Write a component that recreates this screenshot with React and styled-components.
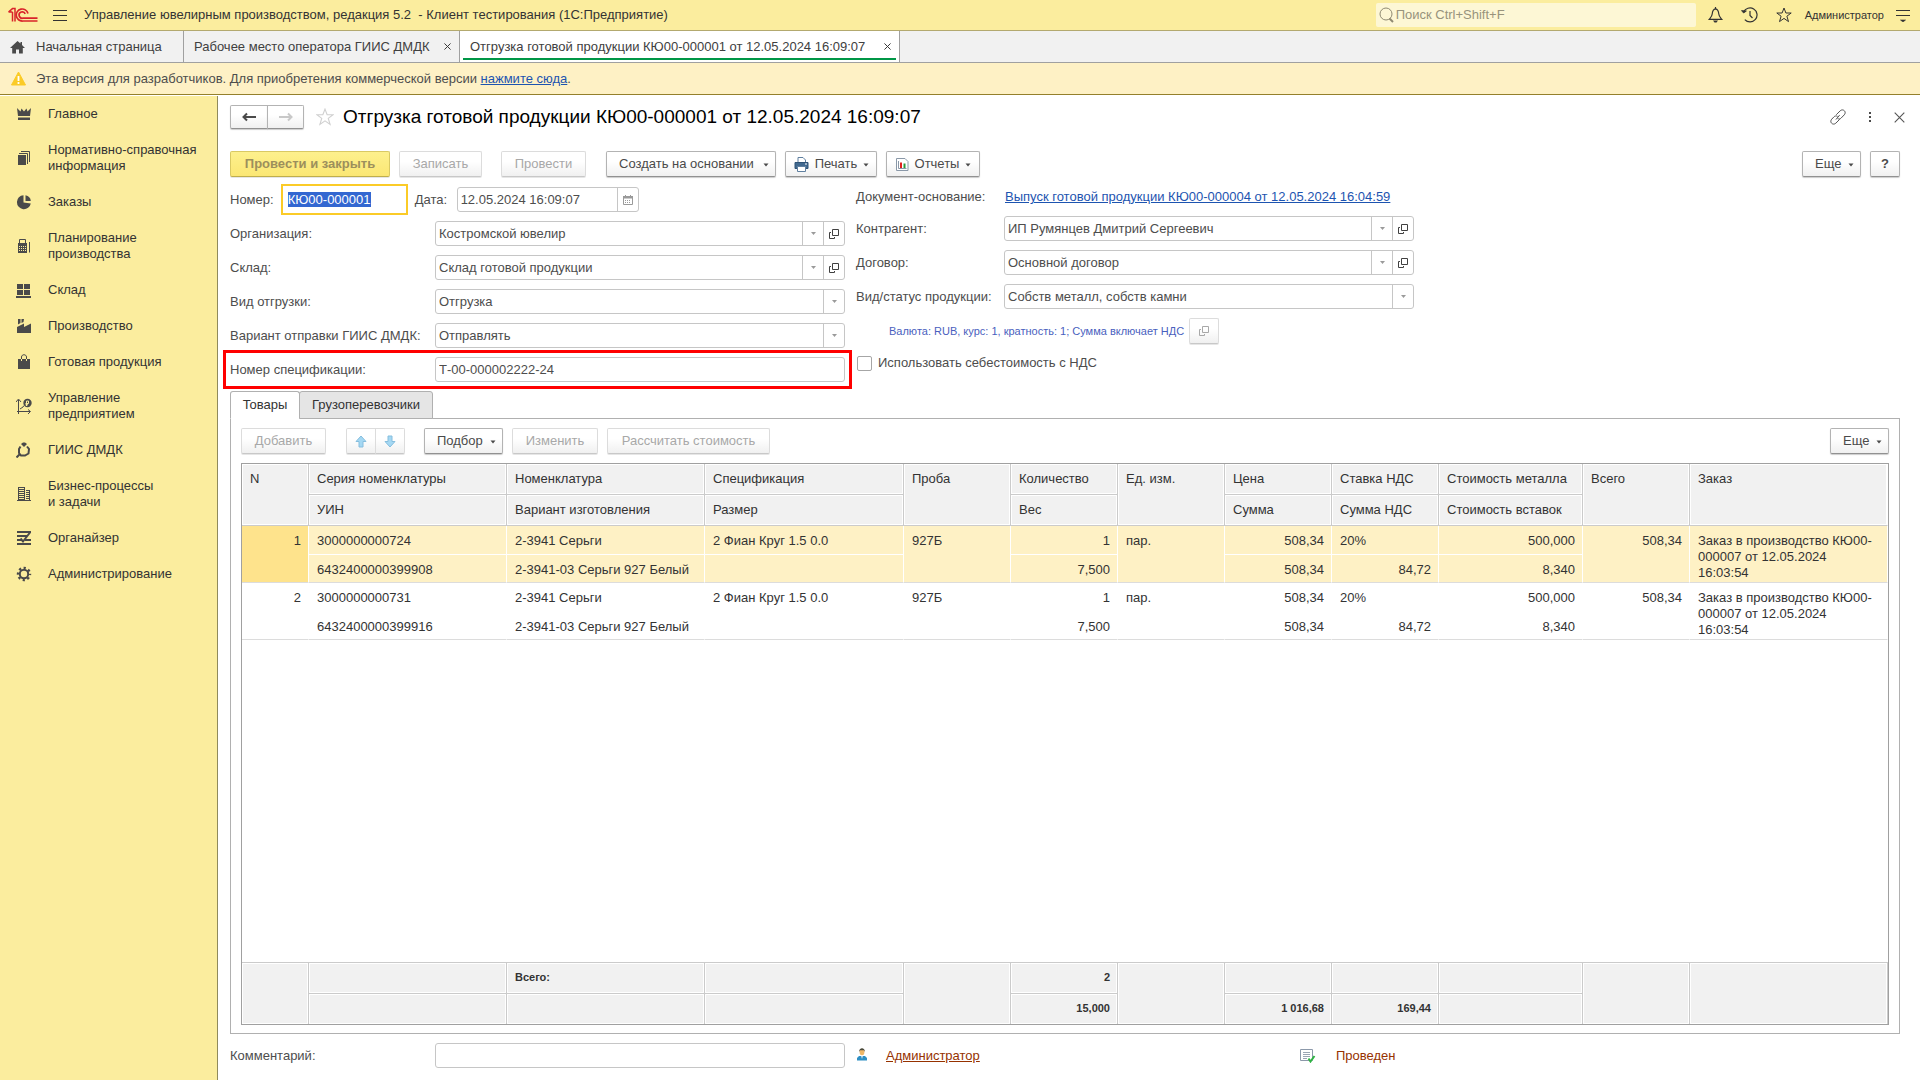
import React, { useEffect, useRef } from 'react';
import styled, { createGlobalStyle, css } from 'styled-components';

const GlobalStyle = createGlobalStyle`
    * {
        box-sizing: border-box;
    }

    body {
        margin: 0;
        background: #ffffff;
        color: #4d4d4d;
        font-family: 'Liberation Sans', Arial, sans-serif;
        font-size: 13px;
        line-height: 16px;
    }

    button, input, select {
        font: inherit;
        color: inherit;
    }

    ::selection {
        background: #3367d1;
        color: #ffffff;
    }
`;

const Page = styled.div`
    min-height: 100vh;
    display: flex;
    flex-direction: column;
`;

const TitleBar = styled.header`
    height: 31px;
    padding: 0 10px 0 8px;
    display: flex;
    align-items: center;
    background: #fbed9e;
    border-bottom: 1px solid #b3a96f;
    color: #333333;
`;

const AppTitle = styled.div`
    flex: 1;
    margin-left: 17px;
    white-space: pre;
`;

const IconButton = styled.button`
    display: flex;
    padding: 0;
    border: 0;
    background: none;
    color: ${props => props.$color || '#333333'};
`;

const MenuButton = styled(IconButton)`
    margin-left: 15px;
`;

const Search = styled.label`
    width: 320px;
    height: 24px;
    margin-right: 12px;
    padding-left: 3px;
    display: flex;
    align-items: center;
    gap: 2px;
    border-radius: 2px;
    background: #fdf7d5;
    color: #8f8a72;

    input {
        flex: 1;
        padding: 0;
        border: 0;
        outline: 0;
        background: none;
    }

    input::placeholder {
        color: #98937c;
        opacity: 1;
    }
`;

const TitleActions = styled.div`
    display: flex;
    align-items: center;
    gap: 18px;
`;

const UserName = styled.span`
    margin: 0 -6px 0 -5px;
    font-size: 11px;
`;

const TabStrip = styled.nav`
    height: 32px;
    display: flex;
    background: #f1f1f1;
    border-bottom: 1px solid #a0a0a0;
`;

const WindowTab = styled.div`
    min-width: ${props => props.$width}px;
    padding: 0 8px 0 10px;
    display: flex;
    align-items: center;
    justify-content: space-between;
    gap: 9px;
    border-right: 1px solid #a0a0a0;
    background: ${props => props.$active ? '#ffffff' : 'none'};
    box-shadow: ${props => props.$active ? 'inset 3px 0 #ffffff, inset -3px 0 #ffffff, inset 0 -2px #ffffff, inset 0 -4px #009646' : 'none'};
    color: #404040;
    white-space: nowrap;
`;

const HomeTab = styled(WindowTab)`
    justify-content: flex-start;
    gap: 11px;
`;

const Notice = styled.div`
    height: 32px;
    padding-left: 11px;
    display: flex;
    align-items: center;
    gap: 10px;
    background: #fef1c5;
    border-bottom: 1px solid #94802b;
`;

const Link = styled.a`
    color: ${props => props.$brown ? '#963200' : '#1d54b0'};
    text-decoration: underline;
`;

const Body = styled.div`
    flex: 1;
    display: flex;
    padding-top: 1px;
`;

const Sidebar = styled.nav`
    flex: none;
    width: 218px;
    background: #fbed9e;
    border-right: 1px solid #8f8a5c;
`;

const SectionLink = styled.a`
    padding: 10px 8px 10px 16px;
    display: flex;
    align-items: center;
    gap: 16px;
    color: #333333;
    text-decoration: none;
    white-space: pre-line;

    svg {
        flex: none;
        color: #4a4a4a;
    }
`;

const Main = styled.main`
    flex: 1;
    min-width: 0;
    padding: 9px 20px 12px 12px;
    display: flex;
    flex-direction: column;
`;

const FormHeader = styled.div`
    height: 24px;
    margin-bottom: 22px;
    display: flex;
    align-items: center;
`;

const HistoryButtons = styled.div`
    display: flex;
    height: 24px;
    margin-right: 12px;
`;

const Heading = styled.h1`
    flex: 1;
    margin: 0 0 0 9px;
    color: #000000;
    font-size: 19px;
    font-weight: 400;
    line-height: 24px;
`;

const HeaderActions = styled.div`
    margin-right: -5px;
    display: flex;
    align-items: center;
    gap: 22px;
`;

const Toolbar = styled.div`
    display: flex;
    margin-bottom: ${props => props.$tight ? '9px' : '10px'};
`;

const Button = styled.button`
    height: 26px;
    min-width: ${props => props.$width || 30}px;
    padding: 0 9px;
    margin-right: 9px;
    display: flex;
    align-items: center;
    justify-content: center;
    gap: 6px;
    border: 1px solid #b3b3b3;
    border-bottom-color: #919191;
    border-radius: 2px;
    background: linear-gradient(#ffffff 40%, #f0f0f0);
    box-shadow: 0 1px 1px #cccccc;
    color: #4a4a4a;
    white-space: nowrap;

    &:disabled {
        border-color: #dcdcdc;
        border-bottom-color: #c8c8c8;
        box-shadow: 0 1px #e6e6e6;
        color: #a8a8a8;
    }

    &:last-child {
        margin-right: 0;
    }

    ${props => props.$menu && css`
        padding: 0 6px 0 12px;
        justify-content: space-between;
    `}

    ${props => props.$icon && css`
        padding: 0 6px 0 7px;
    `}

    ${props => props.$primary && css`
        &:disabled {
            border-color: #d9c964;
            border-bottom-color: #bfae4c;
            background: linear-gradient(#fdf08d, #fbe774);
            color: #9c8f5c;
            font-weight: 700;
        }
    `}

    ${props => props.$gap && css`
        margin-right: ${props.$gap}px;
    `}
`;

const JoinedButton = styled(Button)`
    width: ${props => props.$width}px;
    height: ${props => props.$height}px;
    padding: 0;
    margin: 0;
    border-radius: 2px 0 0 2px;

    & + & {
        margin-left: -1px;
        border-radius: 0 2px 2px 0;
    }
`;

const ArrowPair = styled.div`
    display: flex;
    margin-right: 19px;
`;

const Spacer = styled.div`
    flex: 1;
`;

const FormColumns = styled.div`
    display: flex;
    gap: 11px;
    margin-bottom: 9px;
`;

const FormColumn = styled.div`
    width: ${props => props.$width}px;
    display: flex;
    flex-direction: column;
    gap: 9px;
`;

const Row = styled.div`
    height: ${props => props.$height || 25}px;
    display: flex;
    align-items: center;
    white-space: nowrap;

    ${props => props.$marked && css`
        outline: 3px solid #ff0000;
        outline-offset: 4px;
    `}
`;

const Label = styled.label`
    flex: none;
    width: ${props => props.$width ? `${props.$width}px` : 'auto'};
`;

const FieldBox = styled.div`
    flex: ${props => props.$width ? 'none' : 1};
    width: ${props => props.$width ? `${props.$width}px` : 'auto'};
    height: 25px;
    display: flex;
    border: 1px solid #c6c6c6;
    border-radius: 3px;
    background: #ffffff;

    input, select {
        flex: 1;
        min-width: 0;
        padding: 0 3px;
        border: 0;
        outline: 0;
        background: none;
        appearance: none;
    }
`;

const NumberInput = styled.input`
    width: 121px;
    height: 25px;
    margin: 0 10px;
    padding: 0 4px;
    border: 0;
    outline: 2px solid #fbcb27;
    outline-offset: 1px;
`;

const FieldButton = styled.button`
    width: 21px;
    padding: 0;
    display: flex;
    align-items: center;
    justify-content: center;
    border: 0;
    border-left: 1px solid #c6c6c6;
    background: none;
    color: ${props => props.$dark ? '#404040' : '#9a9a9a'};
`;

const CurrencyText = styled.span`
    margin: 0 5px 0 33px;
    color: #4a5fbe;
    font-size: 11px;
`;

const CheckLabel = styled.label`
    display: flex;
    align-items: center;
    gap: 6px;

    input {
        width: 15px;
        height: 15px;
        margin: 0 0 0 1px;
        appearance: none;
        border: 1px solid #a6a6a6;
        border-radius: 2px;
        background: #ffffff;
    }
`;

const PageTabs = styled.div`
    display: flex;
    position: relative;
    margin-bottom: -1px;
`;

const PageTab = styled.button`
    height: 28px;
    min-width: ${props => props.$width}px;
    padding: 0 10px;
    border: 1px solid #b0b0b0;
    border-radius: 3px 3px 0 0;
    background: ${props => props.$active ? '#ffffff' : '#e5e5e5'};
    border-bottom-color: ${props => props.$active ? '#ffffff' : '#b0b0b0'};
    color: #333333;

    & + & {
        margin-left: -1px;
    }
`;

const Panel = styled.section`
    flex: 1;
    padding: 9px 10px 8px;
    display: flex;
    flex-direction: column;
    border: 1px solid #b0b0b0;
`;

const TableFrame = styled.div`
    flex: 1;
    display: grid;
    border: 1px solid #a0a0a0;
`;

const Table = styled.table`
    width: 100%;
    height: 100%;
    table-layout: fixed;
    border-collapse: separate;
    border-spacing: 0;
    color: #333333;
`;

const HeadCell = styled.th`
    height: 31px;
    padding: 7px 8px 6px;
    background: #f1f1f1;
    border-right: 1px solid #cbcbcb;
    border-bottom: 1px solid #cbcbcb;
    box-shadow: inset 0 0 0 1px #ffffff;
    font-weight: 400;
    text-align: left;
    vertical-align: top;
    white-space: nowrap;

    &:last-child[rowspan='2'] {
        border-right-color: #ffffff;
    }
`;

const Cell = styled.td`
    height: ${props => props.$second ? 28 : 29}px;
    padding: ${props => props.$second ? '7px 7px 4px 8px' : '7px 7px 1px 8px'};
    border-right: 1px solid #ffffff;
    border-bottom: 1px solid ${props => props.$closing ? '#dcdcdc' : '#ffffff'};
    background: ${props => props.$selected ? '#fef1c5' : '#ffffff'};
    text-align: ${props => props.$right ? 'right' : 'left'};
    vertical-align: top;

    ${props => props.$current && css`
        background: #fee38c;
    `}
`;

const FillerCell = styled.td`
    height: 100%;
    padding: 0;
`;

const FootCell = styled.td`
    height: 31px;
    padding: 6px 7px 7px 8px;
    background: #f1f1f1;
    border-right: 1px solid #cbcbcb;
    border-top: 1px solid #cbcbcb;
    box-shadow: inset 0 0 0 1px #ffffff;
    font-size: 11px;
    font-weight: 700;
    text-align: ${props => props.$right ? 'right' : 'left'};
    vertical-align: top;
`;

const Footer = styled.footer`
    height: 25px;
    margin-top: 9px;
    display: flex;
    align-items: center;
`;

const Author = styled.div`
    width: 442px;
    padding-left: 12px;
    display: flex;
    align-items: center;
    gap: 19px;
`;

const Status = styled.div`
    padding-left: 12px;
    display: flex;
    align-items: center;
    gap: 20px;
    color: #963200;
`;

/* icons */

const Svg = ({ w = 16, h = 16, box, children, ...rest }) => (
    <svg width={w} height={h} viewBox={box || `0 0 ${w} ${h}`} fill="none" aria-hidden="true" {...rest}>
        {children}
    </svg>
);

const Logo = () => (
    <Svg w={30} h={16} stroke="#d9232a" strokeWidth="1.7">
        <path d="M0.5 5L4.5 1.6H7V14.5M4.5 5V14.5M0.5 5H4.5" strokeWidth="1.5" />
        <path d="M20 6.4A6 6 0 1 0 14.8 14H29.5" />
        <path d="M17.2 6.8A3.2 3.2 0 1 0 14.8 11.2H29.5" />
    </Svg>
);

const BurgerIcon = () => (
    <Svg w={14} h={14} stroke="currentColor">
        <path d="M0 2.5H14M0 7.5H14M0 12.5H14" />
    </Svg>
);

const SearchIcon = () => (
    <Svg w={15} h={16} stroke="currentColor">
        <circle cx="7" cy="7" r="6" />
        <path d="M10.5 11.5L14 15" strokeWidth="2" />
    </Svg>
);

const BellIcon = () => (
    <Svg w={15} h={16} stroke="currentColor" strokeWidth="1.2">
        <path d="M7.5 1.8C4.8 2.2 4.4 4.5 4.2 7C4 9.5 2.5 10.8 1.2 12.4H13.8C12.5 10.8 11 9.5 10.8 7C10.6 4.5 10.2 2.2 7.5 1.8Z" />
        <path d="M7.5 0V2" />
        <path d="M5 13.5H10L8.5 15.5H6.5Z" fill="currentColor" stroke="none" />
    </Svg>
);

const HistoryIcon = () => (
    <Svg w={17} h={16} stroke="currentColor" strokeWidth="1.2">
        <path d="M2.6 5.2A7 7 0 1 1 3.8 12.6" />
        <path d="M0.5 3.6L2.6 6L5.4 4Z" fill="currentColor" strokeWidth="0.8" />
        <path d="M9 4V8.5L11.5 11" />
    </Svg>
);

const StarIcon = ({ size = 16, color = 'currentColor' }) => (
    <Svg w={size} h={size} box="0 0 16 16" stroke={color}>
        <path d="M8 1L9.9 6H15.2L10.9 9.2L12.5 14.6L8 11.4L3.5 14.6L5.1 9.2L0.8 6H6.1Z" />
    </Svg>
);

const ServiceIcon = () => (
    <Svg w={14} h={14}>
        <path d="M0 2.5H14M0 7.5H14" stroke="currentColor" />
        <path d="M4.5 12H9.5L7 14Z" fill="currentColor" stroke="currentColor" strokeWidth="0.6" />
    </Svg>
);

const HomeIcon = () => (
    <Svg w={15} h={14}>
        <path d="M7.5 1L0 8H2.2V13.5H6V9.5H9V13.5H12.8V8H15L12 5V2H10.5V3.6Z" fill="#4a4a4a" />
    </Svg>
);

const CloseIcon = ({ size = 7 }) => (
    <Svg w={size} h={size} box="0 0 8 8" stroke="currentColor" strokeWidth={size > 8 ? 0.8 : 1.1}>
        <path d="M0.5 0.5L7.5 7.5M7.5 0.5L0.5 7.5" />
    </Svg>
);

const WarningIcon = () => (
    <Svg w={15} h={15}>
        <path d="M7.5 1L14.5 14H0.5Z" fill="#fbcb27" stroke="#fbcb27" strokeLinejoin="round" />
        <path d="M7.5 5V10M7.5 11V13" stroke="#ffffff" strokeWidth="1.8" />
    </Svg>
);

const BackIcon = ({ forward }) => (
    <Svg w={14} h={10} stroke={forward ? '#c8c8c8' : '#4a4a4a'} strokeWidth="2">
        {forward
            ? <path d="M0 5H12M9 1.5L12.5 5L9 8.5" />
            : <path d="M14 5H2M5 1.5L1.5 5L5 8.5" />}
    </Svg>
);

const ChainIcon = () => (
    <Svg w={16} h={16} stroke="currentColor" strokeLinecap="round">
        <path d="M6.5 5.5L10.2 1.8C11.4 .6 13.3 .6 14.4 1.8C15.5 2.9 15.4 4.6 14.3 5.8L11 9.2C10.2 10 9 10.2 8 9.8" />
        <path d="M9.5 10.5L5.8 14.2C4.6 15.4 2.7 15.4 1.6 14.2C.5 13.1 .6 11.4 1.7 10.2L4 7.8C4.8 7 6 6.6 7.2 7.2" />
        <path d="M6.2 10.2L9.4 6.4" />
    </Svg>
);

const DotsIcon = () => (
    <Svg w={4} h={12}>
        <path d="M1 1h2v2H1zM1 5h2v2H1zM1 9h2v2H1z" fill="#4a4a4a" />
    </Svg>
);

const Caret = () => (
    <Svg w={6} h={5}>
        <path d="M0.5 1.5H5.5L3 4.5Z" fill="currentColor" />
    </Svg>
);

const FieldCaret = () => (
    <Svg w={5} h={3}>
        <path d="M0 0H5L2.5 3Z" fill="currentColor" />
    </Svg>
);

const OpenIcon = () => (
    <Svg w={10} h={10} stroke="currentColor">
        <path d="M3.5 0.5H9.5V6.5H3.5ZM2 3.5H0.5V9.5H5.5V8" />
    </Svg>
);

const CalendarIcon = () => (
    <Svg w={10} h={10}>
        <path d="M0.5 1.5H9.5V9.5H0.5Z" stroke="currentColor" />
        <path d="M0 1H10V3.5H0Z" fill="currentColor" />
        <path d="M2.5 0V2M7.5 0V2" stroke="currentColor" />
        <path d="M2 5.5H8M2 7.5H8" stroke="currentColor" strokeDasharray="1 1" />
    </Svg>
);

const PrinterIcon = () => (
    <Svg w={15} h={15}>
        <path d="M4 5V0.5H9L11.5 3V5" fill="#ffffff" stroke="#5f7f9f" />
        <path d="M1 5.5H14V11.5H1Z" fill="#41698f" stroke="#2f5377" />
        <path d="M11 7H13" stroke="#ffffff" />
        <path d="M3.5 9.5H11.5V14.5H3.5Z" fill="#ffffff" stroke="#5f7f9f" />
    </Svg>
);

const ReportIcon = () => (
    <Svg w={13} h={15}>
        <path d="M0.5 1.5H9L12 4.5V13.5H0.5Z" fill="#ffffff" stroke="#8a98a8" />
        <path d="M2.5 4V11.5H10.5" stroke="#8a98a8" />
        <path d="M5 5.5V11" stroke="#e02020" strokeWidth="2" />
        <path d="M8.5 6.5V11" stroke="#2a9a3a" strokeWidth="2" />
    </Svg>
);

const MoveIcon = ({ down }) => (
    <Svg w={12} h={13}>
        <path
            d={down ? 'M4 1H8V6.5H11L6 12L1 6.5H4Z' : 'M6 1L11 6.5H8V12H4V6.5H1Z'}
            fill="#a5d8f3"
            stroke="#86bede"
        />
    </Svg>
);

const PersonIcon = () => (
    <Svg w={10} h={16}>
        <path d="M0 12.5V10L2 8H8L10 10V12.5Z" fill="#2f8fc4" />
        <path d="M4 7H6L5 11Z" fill="#ffffff" />
        <ellipse cx="5" cy="4" rx="2.4" ry="3.2" fill="#efb768" />
        <path d="M2 4C2 -1 8 -1 8 4L7 2.3H3Z" fill="#4a4a3c" />
    </Svg>
);

const PostedIcon = () => (
    <Svg w={17} h={14}>
        <path d="M1.5 0.5H13.5V11.5H1.5Z" fill="#ffffff" stroke="#8c99aa" />
        <path d="M4 3.5H11M4 5.5H11M4 7.5H11M4 9.5H8" stroke="#9aa6b4" />
        <path d="M9.5 9.5L11.5 12.5L15.5 7" stroke="#2fb344" strokeWidth="2" />
    </Svg>
);

const sectionIcons = {
    crown: <path d="M1 2L4.5 5.5L5.5 2.5L8 5.5L10.5 2.5L11.5 5.5L15 2L14 10H2ZM2 11.5H14V14H2Z" fill="currentColor" />,
    docs: (
        <>
            <path d="M2 5H10V15H2Z" fill="currentColor" />
            <path d="M3 3.5H11.5V14M5 1.5H13.5V12" stroke="currentColor" />
        </>
    ),
    pie: (
        <>
            <path d="M7.5 8.5V1.2A7 7 0 1 0 14.8 9.5L7.5 8.5Z" fill="currentColor" />
            <path d="M9.5 7V1.2A6.5 6.5 0 0 1 14.8 7Z" fill="currentColor" />
        </>
    ),
    calc: (
        <>
            <path d="M3.5 5V1.5H9.5V5M13.5 4V14.5" stroke="currentColor" />
            <path d="M2 5H11V15H2Z" fill="currentColor" />
            <path d="M3 8.5H10M3 10.5H10M3 12.5H10" stroke="#fbed9e" strokeDasharray="1 1" />
        </>
    ),
    boxes: <path d="M1 2H7V7H1ZM8 2H14V7H8ZM1 8H7V13H1ZM8 8H14V13H8ZM0 14H15V16H0Z" fill="currentColor" />,
    factory: <path d="M1 15V9L8 5.5V9L15 5.5V15ZM2 1H4.5V5L2 6.5ZM5.5 1H8L7.5 4L5.5 5Z" fill="currentColor" />,
    bag: (
        <>
            <path d="M2 5H14V15H2Z" fill="currentColor" />
            <path d="M5.5 5V3C5.5 0 10.5 0 10.5 3V5" stroke="currentColor" />
            <path d="M5.5 5V7M10.5 5V7" stroke="#fbed9e" />
        </>
    ),
    chart: (
        <>
            <path d="M2.5 16V2M0 4L2.5 1L5 4M1 13.5H14M12 11.5L14.5 13.5L12 16M4 11L7 9L8 7.5" stroke="currentColor" />
            <circle cx="11.5" cy="5" r="4.2" fill="currentColor" />
            <path d="M10.5 8V3H12.5V5.5H9.5M9.5 6.8H12" stroke="#fbed9e" />
        </>
    ),
    ring: (
        <>
            <path d="M4.5 4.5L3 7V11L5 13.5H9L12.5 11.5L13 7L11 4.5" stroke="currentColor" strokeWidth="2" />
            <path d="M5 2L7 0.5H9L11 2L8 5Z" fill="currentColor" />
            <path d="M4 12L0.5 15.5" stroke="currentColor" strokeWidth="2" />
        </>
    ),
    building: (
        <>
            <path d="M1 14.5H15" stroke="currentColor" />
            <path d="M2 1H9V15H2ZM10 4H14V15H10Z" fill="currentColor" />
            <path d="M3 2.5H8M3 4.5H8M3 6.5H8M3 8.5H8M3 10.5H8M3 12.5H8M10 5.5H13M10 7.5H13M10 9.5H13M10 11.5H13M10 13.5H13" stroke="#fbed9e" />
        </>
    ),
    organizer: (
        <>
            <path d="M1 2H15M1 6H11M1 10H6M9 10H15M1 14H15" stroke="currentColor" strokeWidth="2" />
            <path d="M14 2.5L7 11.5L4.5 8.5" stroke="currentColor" strokeWidth="2" />
        </>
    ),
    gear: (
        <>
            <circle cx="8" cy="8" r="4.2" stroke="currentColor" strokeWidth="2" />
            <circle cx="8" cy="8" r="6" stroke="currentColor" strokeWidth="2.4" strokeDasharray="2.2 2.51" strokeDashoffset="1.1" />
        </>
    ),
};

/* data */

const sections = [
    { icon: 'crown', title: 'Главное' },
    { icon: 'docs', title: 'Нормативно-справочная\nинформация' },
    { icon: 'pie', title: 'Заказы' },
    { icon: 'calc', title: 'Планирование\nпроизводства' },
    { icon: 'boxes', title: 'Склад' },
    { icon: 'factory', title: 'Производство' },
    { icon: 'bag', title: 'Готовая продукция' },
    { icon: 'chart', title: 'Управление\nпредприятием' },
    { icon: 'ring', title: 'ГИИС ДМДК' },
    { icon: 'building', title: 'Бизнес-процессы\nи задачи' },
    { icon: 'organizer', title: 'Органайзер' },
    { icon: 'gear', title: 'Администрирование' },
];

// top / bottom: captions of the two header lines, no bottom means the cell spans both
const columns = [
    { width: 67, top: 'N', key: 'n', right: true },
    { width: 198, top: 'Серия номенклатуры', bottom: 'УИН', key: 'series', key2: 'uin' },
    { width: 198, top: 'Номенклатура', bottom: 'Вариант изготовления', key: 'item', key2: 'variant', total: 'Всего:' },
    { width: 199, top: 'Спецификация', bottom: 'Размер', key: 'spec', key2: 'size' },
    { width: 107, top: 'Проба', key: 'probe' },
    { width: 107, top: 'Количество', bottom: 'Вес', key: 'count', key2: 'weight', right: true, right2: true, total: '2', total2: '15,000' },
    { width: 107, top: 'Ед. изм.', key: 'unit' },
    { width: 107, top: 'Цена', bottom: 'Сумма', key: 'price', key2: 'sum', right: true, right2: true, total2: '1 016,68' },
    { width: 107, top: 'Ставка НДС', bottom: 'Сумма НДС', key: 'rate', key2: 'vat', right2: true, total2: '169,44' },
    { width: 144, top: 'Стоимость металла', bottom: 'Стоимость вставок', key: 'metal', key2: 'stones', right: true, right2: true },
    { width: 107, top: 'Всего', key: 'total', right: true },
    { top: 'Заказ', key: 'order' },
];

const common = {
    item: '2-3941 Серьги',
    variant: '2-3941-03 Серьги 927 Белый',
    spec: '2 Фиан Круг 1.5 0.0',
    probe: '927Б',
    count: '1',
    weight: '7,500',
    unit: 'пар.',
    price: '508,34',
    sum: '508,34',
    rate: '20%',
    vat: '84,72',
    metal: '500,000',
    stones: '8,340',
    total: '508,34',
    order: 'Заказ в производство КЮ00-000007 от 12.05.2024 16:03:54',
};

const goods = [
    { ...common, n: '1', series: '3000000000724', uin: '6432400000399908' },
    { ...common, n: '2', series: '3000000000731', uin: '6432400000399916' },
];

const twoLine = columns.filter(column => column.bottom);

function SelectField({ id, value, openable }) {
    return (
        <FieldBox>
            <select id={id} defaultValue={value}>
                <option>{value}</option>
            </select>
            <FieldButton type="button" aria-label="Выбрать"><FieldCaret /></FieldButton>
            {openable && (
                <FieldButton type="button" $dark aria-label="Открыть"><OpenIcon /></FieldButton>
            )}
        </FieldBox>
    );
}

function GoodsTable() {
    return (
        <TableFrame>
            <Table>
                <colgroup>
                    {columns.map(column => <col key={column.key} width={column.width} />)}
                </colgroup>
                <thead>
                    <tr>
                        {columns.map(column => (
                            <HeadCell key={column.key} rowSpan={column.bottom ? 1 : 2}>{column.top}</HeadCell>
                        ))}
                    </tr>
                    <tr>
                        {twoLine.map(column => <HeadCell key={column.key}>{column.bottom}</HeadCell>)}
                    </tr>
                </thead>
                <tbody>
                    {goods.map((row, index) => (
                        <React.Fragment key={row.n}>
                            <tr>
                                {columns.map(column => (
                                    <Cell
                                        key={column.key}
                                        rowSpan={column.bottom ? 1 : 2}
                                        $closing={!column.bottom}
                                        $right={column.right}
                                        $selected={index === 0}
                                        $current={index === 0 && column.key === 'n'}>
                                        {row[column.key]}
                                    </Cell>
                                ))}
                            </tr>
                            <tr>
                                {twoLine.map(column => (
                                    <Cell
                                        key={column.key}
                                        $second
                                        $closing
                                        $right={column.right2}
                                        $selected={index === 0}>
                                        {row[column.key2]}
                                    </Cell>
                                ))}
                            </tr>
                        </React.Fragment>
                    ))}
                    <tr>
                        <FillerCell colSpan={columns.length} />
                    </tr>
                </tbody>
                <tfoot>
                    <tr>
                        {columns.map(column => (
                            <FootCell key={column.key} rowSpan={column.bottom ? 1 : 2} $right={column.right}>
                                {column.total}
                            </FootCell>
                        ))}
                    </tr>
                    <tr>
                        {twoLine.map(column => (
                            <FootCell key={column.key} $right={column.right2}>{column.total2}</FootCell>
                        ))}
                    </tr>
                </tfoot>
            </Table>
        </TableFrame>
    );
}

function DocumentForm() {
    const numberRef = useRef(null);

    useEffect(() => {
        numberRef.current.focus();
        numberRef.current.select();
    }, []);

    return (
        <FormColumns>
            <FormColumn $width={615}>
                <Row>
                    <Label htmlFor="number">Номер:</Label>
                    <NumberInput id="number" ref={numberRef} defaultValue="КЮ00-000001" />
                    <Label htmlFor="date" $width={42}>Дата:</Label>
                    <FieldBox $width={182}>
                        <input id="date" defaultValue="12.05.2024 16:09:07" />
                        <FieldButton type="button" aria-label="Календарь"><CalendarIcon /></FieldButton>
                    </FieldBox>
                </Row>
                <Row>
                    <Label htmlFor="org" $width={205}>Организация:</Label>
                    <SelectField id="org" value="Костромской ювелир" openable />
                </Row>
                <Row>
                    <Label htmlFor="store" $width={205}>Склад:</Label>
                    <SelectField id="store" value="Склад готовой продукции" openable />
                </Row>
                <Row>
                    <Label htmlFor="kind" $width={205}>Вид отгрузки:</Label>
                    <SelectField id="kind" value="Отгрузка" />
                </Row>
                <Row>
                    <Label htmlFor="sending" $width={205}>Вариант отправки ГИИС ДМДК:</Label>
                    <SelectField id="sending" value="Отправлять" />
                </Row>
                <Row $marked>
                    <Label htmlFor="specNumber" $width={205}>Номер спецификации:</Label>
                    <FieldBox>
                        <input id="specNumber" defaultValue="Т-00-000002222-24" />
                    </FieldBox>
                </Row>
            </FormColumn>
            <FormColumn $width={558}>
                <Row $height={20}>
                    <Label as="span" $width={149}>Документ-основание:</Label>
                    <Link href="#base">Выпуск готовой продукции КЮ00-000004 от 12.05.2024 16:04:59</Link>
                </Row>
                <Row>
                    <Label htmlFor="partner" $width={148}>Контрагент:</Label>
                    <SelectField id="partner" value="ИП Румянцев Дмитрий Сергеевич" openable />
                </Row>
                <Row>
                    <Label htmlFor="contract" $width={148}>Договор:</Label>
                    <SelectField id="contract" value="Основной договор" openable />
                </Row>
                <Row>
                    <Label htmlFor="status" $width={148}>Вид/статус продукции:</Label>
                    <SelectField id="status" value="Собств металл, собств камни" />
                </Row>
                <Row $height={26}>
                    <CurrencyText>Валюта: RUB, курс: 1, кратность: 1; Сумма включает НДС</CurrencyText>
                    <Button type="button" disabled aria-label="Цены и валюта"><OpenIcon /></Button>
                </Row>
                <Row $height={20}>
                    <CheckLabel>
                        <input type="checkbox" />
                        Использовать себестоимость с НДС
                    </CheckLabel>
                </Row>
            </FormColumn>
        </FormColumns>
    );
}

function App() {
    return (
        <Page>
            <GlobalStyle />
            <TitleBar>
                <Logo />
                <MenuButton type="button" aria-label="Меню"><BurgerIcon /></MenuButton>
                <AppTitle>{'Управление ювелирным производством, редакция 5.2  - Клиент тестирования (1С:Предприятие)'}</AppTitle>
                <Search>
                    <SearchIcon />
                    <input type="search" aria-label="Поиск" placeholder="Поиск Ctrl+Shift+F" />
                </Search>
                <TitleActions>
                    <IconButton type="button" aria-label="Уведомления"><BellIcon /></IconButton>
                    <IconButton type="button" aria-label="История"><HistoryIcon /></IconButton>
                    <IconButton type="button" aria-label="Избранное"><StarIcon /></IconButton>
                    <UserName>Администратор</UserName>
                    <IconButton type="button" aria-label="Сервис"><ServiceIcon /></IconButton>
                </TitleActions>
            </TitleBar>
            <TabStrip>
                <HomeTab $width={184}><HomeIcon />Начальная страница</HomeTab>
                <WindowTab $width={276}>
                    Рабочее место оператора ГИИС ДМДК
                    <IconButton type="button" aria-label="Закрыть"><CloseIcon /></IconButton>
                </WindowTab>
                <WindowTab $width={440} $active>
                    Отгрузка готовой продукции КЮ00-000001 от 12.05.2024 16:09:07
                    <IconButton type="button" aria-label="Закрыть"><CloseIcon /></IconButton>
                </WindowTab>
            </TabStrip>
            <Notice>
                <WarningIcon />
                <span>
                    Эта версия для разработчиков. Для приобретения коммерческой версии <Link href="#buy">нажмите сюда</Link>.
                </span>
            </Notice>
            <Body>
                <Sidebar>
                    {sections.map(section => (
                        <SectionLink key={section.icon} href={`#${section.icon}`}>
                            <Svg>{sectionIcons[section.icon]}</Svg>
                            <span>{section.title}</span>
                        </SectionLink>
                    ))}
                </Sidebar>
                <Main>
                    <FormHeader>
                        <HistoryButtons>
                            <JoinedButton type="button" $width={38} $height={24} aria-label="Назад"><BackIcon /></JoinedButton>
                            <JoinedButton type="button" $width={37} $height={24} aria-label="Вперед"><BackIcon forward /></JoinedButton>
                        </HistoryButtons>
                        <IconButton type="button" aria-label="В избранное"><StarIcon size={18} color="#d0d0d0" /></IconButton>
                        <Heading>Отгрузка готовой продукции КЮ00-000001 от 12.05.2024 16:09:07</Heading>
                        <HeaderActions>
                            <IconButton type="button" $color="#555555" aria-label="Ссылка"><ChainIcon /></IconButton>
                            <IconButton type="button" aria-label="Еще"><DotsIcon /></IconButton>
                            <IconButton type="button" $color="#555555" aria-label="Закрыть"><CloseIcon size={11} /></IconButton>
                        </HeaderActions>
                    </FormHeader>
                    <Toolbar>
                        <Button type="button" $width={160} $primary disabled>Провести и закрыть</Button>
                        <Button type="button" $width={83} $gap={19} disabled>Записать</Button>
                        <Button type="button" $width={85} $gap={20} disabled>Провести</Button>
                        <Button type="button" $width={170} $menu>Создать на основании<Caret /></Button>
                        <Button type="button" $width={92} $icon><PrinterIcon />Печать<Caret /></Button>
                        <Button type="button" $width={94} $icon><ReportIcon />Отчеты<Caret /></Button>
                        <Spacer />
                        <Button type="button" $width={59} $menu>Еще<Caret /></Button>
                        <Button type="button"><b>?</b></Button>
                    </Toolbar>
                    <DocumentForm />
                    <PageTabs>
                        <PageTab type="button" $width={70} $active>Товары</PageTab>
                        <PageTab type="button" $width={134}>Грузоперевозчики</PageTab>
                    </PageTabs>
                    <Panel>
                        <Toolbar $tight>
                            <Button type="button" $width={85} $gap={20} disabled>Добавить</Button>
                            <ArrowPair>
                                <JoinedButton type="button" $width={30} $height={26} disabled aria-label="Вверх"><MoveIcon /></JoinedButton>
                                <JoinedButton type="button" $width={30} $height={26} disabled aria-label="Вниз"><MoveIcon down /></JoinedButton>
                            </ArrowPair>
                            <Button type="button" $width={79} $menu>Подбор<Caret /></Button>
                            <Button type="button" $width={86} disabled>Изменить</Button>
                            <Button type="button" $width={163} disabled>Рассчитать стоимость</Button>
                            <Spacer />
                            <Button type="button" $width={59} $menu>Еще<Caret /></Button>
                        </Toolbar>
                        <GoodsTable />
                    </Panel>
                    <Footer>
                        <Label htmlFor="comment" $width={205}>Комментарий:</Label>
                        <FieldBox $width={410}>
                            <input id="comment" />
                        </FieldBox>
                        <Author>
                            <PersonIcon />
                            <Link href="#author" $brown>Администратор</Link>
                        </Author>
                        <Status><PostedIcon />Проведен</Status>
                    </Footer>
                </Main>
            </Body>
        </Page>
    );
}

export default App;
